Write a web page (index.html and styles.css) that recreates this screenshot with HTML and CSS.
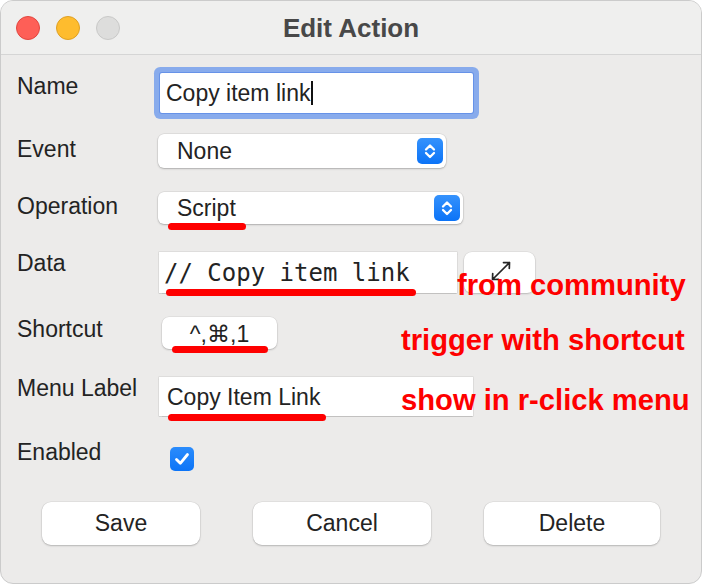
FILE: index.html
```html
<!DOCTYPE html>
<html lang="en">
<head>
<meta charset="utf-8">
<title>Edit Action</title>
<link rel="stylesheet" href="styles.css">
</head>
<body>
<div class="window">
  <header class="titlebar">
    <div class="lights">
      <span class="light red"></span>
      <span class="light yellow"></span>
      <span class="light gray"></span>
    </div>
    <h1 class="title">Edit Action</h1>
    <div></div>
  </header>

  <div class="form">
    <div class="row row-name">
      <span class="label">Name</span>
      <div class="textfield name-field">Copy item link<span class="caret"></span></div>
    </div>
    <div class="row row-event">
      <span class="label">Event</span>
      <div class="select event-select">
        <span>None</span>
        <span class="stepper"><svg viewBox="0 0 26 26" width="26" height="26"><path d="M9 11.5 L13 7.5 L17 11.5 M9 15 L13 19 L17 15" fill="none" stroke="#fff" stroke-width="2.3" stroke-linecap="round" stroke-linejoin="round"/></svg></span>
      </div>
    </div>
    <div class="row row-op">
      <span class="label">Operation</span>
      <div class="select op-select">
        <span>Script</span>
        <span class="stepper"><svg viewBox="0 0 26 26" width="26" height="26"><path d="M9 11.5 L13 7.5 L17 11.5 M9 15 L13 19 L17 15" fill="none" stroke="#fff" stroke-width="2.3" stroke-linecap="round" stroke-linejoin="round"/></svg></span>
      </div>
    </div>
    <div class="row row-data">
      <span class="label">Data</span>
      <div class="textfield data-field">// Copy item link</div>
      <div class="expand-btn"><svg viewBox="0 0 24 24" width="24" height="24"><path d="M4.5 20.5 L21.5 3.5 M15.5 3.7 L21.5 3.5 L21.3 9.5 M4.7 14.5 L4.5 20.5 L10.5 20.3" fill="none" stroke="#262626" stroke-width="1.7" stroke-linecap="round" stroke-linejoin="round"/></svg></div>
    </div>
    <div class="row row-shortcut">
      <span class="label">Shortcut</span>
      <div class="shortcut-btn">^,⌘,1</div>
    </div>
    <div class="row row-menu">
      <span class="label">Menu Label</span>
      <div class="textfield menu-field">Copy Item Link</div>
    </div>
    <div class="row row-enabled">
      <span class="label">Enabled</span>
      <span class="checkbox"><svg viewBox="0 0 24 24" width="24" height="24"><path d="M6.5 12.5 L10.3 16.3 L17.5 7.5" fill="none" stroke="#fff" stroke-width="2.8" stroke-linecap="round" stroke-linejoin="round"/></svg></span>
    </div>
  </div>

  <div class="buttons">
    <div class="btn btn-save">Save</div>
    <div class="btn btn-cancel">Cancel</div>
    <div class="btn btn-delete">Delete</div>
  </div>

  <span class="mark mark-script"></span>
  <span class="mark mark-data"></span>
  <span class="mark mark-shortcut"></span>
  <span class="mark mark-menu"></span>

  <span class="note note-community">from community</span>
  <span class="note note-shortcut">trigger with shortcut</span>
  <span class="note note-menu">show in r-click menu</span>
</div>
</body>
</html>
```
FILE: styles.css
```css
* { box-sizing: border-box; }
html, body { margin: 0; padding: 0; }
body {
  width: 702px;
  height: 584px;
  overflow: hidden;
  background: #ffffff;
  font-family: "Liberation Sans", "DejaVu Sans", Arial, sans-serif;
  color: #232323;
}

.window {
  position: relative;
  width: 702px;
  height: 584px;
  background: #ecebea;
  border: 1px solid #cbcbcb;
  border-radius: 13px;
  overflow: hidden;
}

/* title bar */
.titlebar {
  height: 54px;
  background: #efefee;
  border-bottom: 1px solid #d5d5d5;
  display: grid;
  grid-template-columns: 1fr auto 1fr;
  align-items: center;
}
.lights {
  display: flex;
  gap: 16px;
  padding-left: 15px;
}
.light {
  width: 24px;
  height: 24px;
  border-radius: 50%;
  border: 1px solid transparent;
}
.light.red { background: #fe5f57; border-color: #e2463f; }
.light.yellow { background: #febc2e; border-color: #dfa023; }
.light.gray { background: #dddddc; border-color: #c9c9c8; }
.title {
  margin: 0;
  font-size: 26px;
  font-weight: bold;
  color: #484848;
  line-height: 28px;
}

/* form */
.form {
  padding-left: 16px;
}
.row {
  display: flex;
  align-items: flex-start;
}
.label {
  flex: none;
  width: 141px;
  font-size: 23px;
  line-height: 28px;
  color: #232323;
}

.textfield {
  background: #fff;
  font-size: 23px;
  display: flex;
  align-items: center;
  box-shadow: 0 0 0 0.5px rgba(0,0,0,0.12), 0 0.5px 1px rgba(0,0,0,0.12);
}

.row-name { margin-top: 12px; }
.row-name .label { margin-top: 5px; }
.name-field {
  margin-top: 6px;
  margin-left: 2px;
  width: 313px;
  height: 40px;
  padding-left: 6px;
  border-radius: 2px;
  box-shadow: 0 0 0 1px rgba(80,130,230,0.6), 0 0 0 6px rgba(75,133,237,0.62);
}
.caret {
  display: inline-block;
  width: 2px;
  height: 24px;
  background: #111;
  margin-left: 1px;
}

.select {
  background: #fff;
  border-radius: 6px;
  box-shadow: 0 0 0 0.5px rgba(0,0,0,0.1), 0 1px 2px rgba(0,0,0,0.22);
  display: flex;
  align-items: center;
  padding-left: 19px;
  padding-right: 3px;
  font-size: 23px;
}
.select .stepper {
  margin-left: auto;
  width: 26px;
  height: 26px;
  border-radius: 5px;
  background: linear-gradient(#3592fc, #0b73f7);
  display: flex;
}

.row-event { margin-top: 21px; }
.row-event .label { margin-top: 1px; }
.event-select { width: 288px; height: 34px; }

.row-op { margin-top: 24px; }
.op-select { width: 305px; height: 32px; }

.row-data { margin-top: 25px; }
.data-field {
  margin-top: 3px;
  margin-left: 1px;
  width: 298px;
  height: 41px;
  padding-left: 5px;
  font-family: "DejaVu Sans Mono", "Liberation Mono", monospace;
  font-size: 24px;
}
.expand-btn {
  margin-top: 3px;
  margin-left: 7px;
  width: 71px;
  height: 41px;
  background: #fff;
  border-radius: 8px;
  box-shadow: 0 0 0 0.5px rgba(0,0,0,0.08), 0 1px 2px rgba(0,0,0,0.18);
  display: flex;
  align-items: center;
  justify-content: center;
  padding-bottom: 4px;
}

.row-shortcut { margin-top: 22px; }
.shortcut-btn {
  margin-top: 2px;
  margin-left: 4px;
  width: 115px;
  height: 32px;
  background: #fff;
  border-radius: 7px;
  box-shadow: 0 0 0 0.5px rgba(0,0,0,0.08), 0 1px 2px rgba(0,0,0,0.2);
  font-size: 23px;
  display: flex;
  align-items: center;
  justify-content: center;
  padding-top: 2px;
}

.row-menu { margin-top: 25px; }
.menu-field {
  margin-top: 3px;
  margin-left: 1px;
  width: 314px;
  height: 39px;
  padding-left: 8px;
  padding-top: 2px;
}

.row-enabled { margin-top: 22px; }
.checkbox {
  margin-top: 9px;
  margin-left: 12px;
  width: 24px;
  height: 24px;
  border-radius: 5px;
  background: linear-gradient(#2b8cfc, #0c74f7);
  display: flex;
}

/* bottom buttons */
.buttons {
  margin-top: 31px;
  padding: 0 41px;
  display: flex;
  justify-content: space-between;
}
.btn {
  height: 43px;
  background: #fff;
  border-radius: 9px;
  box-shadow: 0 0 0 0.5px rgba(0,0,0,0.08), 0 1px 2px rgba(0,0,0,0.2);
  font-size: 23px;
  display: flex;
  align-items: center;
  justify-content: center;
}
.btn-save { width: 158px; }
.btn-cancel { width: 178px; }
.btn-delete { width: 176px; }

/* annotations (overlaid) */
.mark {
  position: absolute;
  height: 7px;
  border-radius: 4px;
  background: #fe0000;
}
.mark-script { left: 167px; top: 222px; width: 78px; }
.mark-data { left: 165px; top: 288px; width: 250px; }
.mark-shortcut { left: 171px; top: 345px; width: 96px; }
.mark-menu { left: 167px; top: 413px; width: 158px; }

.note {
  position: absolute;
  color: #fe0000;
  font-weight: bold;
  font-size: 29.2px;
  line-height: 29px;
  white-space: nowrap;
}
.note-community { left: 456px; top: 270px; }
.note-shortcut { left: 400px; top: 325px; }
.note-menu { left: 400px; top: 385px; }
```
